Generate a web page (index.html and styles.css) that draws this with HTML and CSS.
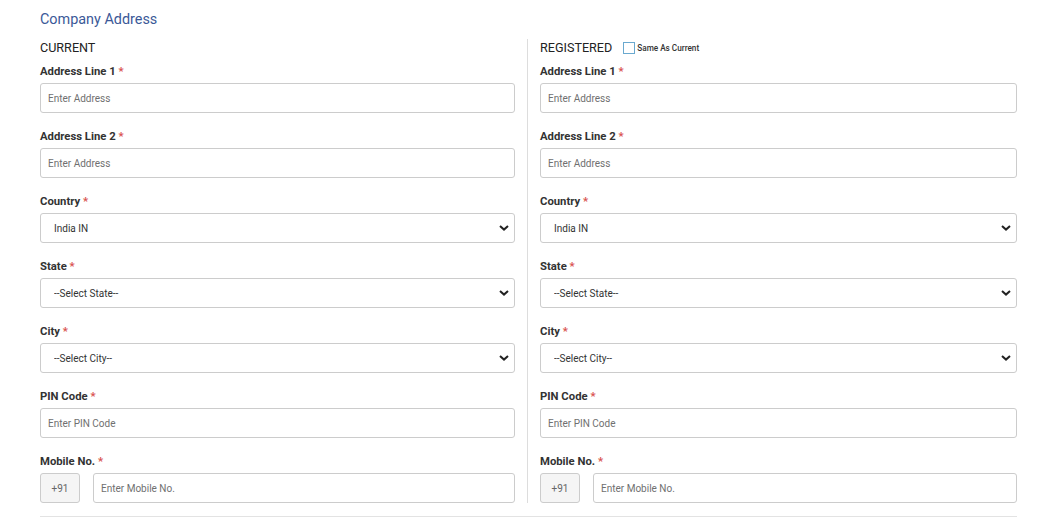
FILE: index.html
```html
<!DOCTYPE html>
<html>
<head>
<meta charset="utf-8">
<link rel="stylesheet" href="styles.css">
</head>
<body>
<div class="page">
  <h2 class="title">Company Address</h2>
  <div class="cols">
    <div class="col col-left">
      <div class="col-head"><span class="col-title">CURRENT</span></div>
      <div class="field"><label class="lbl">Address Line 1 <span class="req">*</span></label><input class="ctl" placeholder="Enter Address"></div>
      <div class="field"><label class="lbl">Address Line 2 <span class="req">*</span></label><input class="ctl" placeholder="Enter Address"></div>
      <div class="field"><label class="lbl">Country <span class="req">*</span></label><div class="sel-wrap"><select class="ctl sel"><option>India IN</option></select><svg class="chev" viewBox="0 0 10 6" width="10" height="6"><path d="M1 1 L5 4.6 L9 1" fill="none" stroke="#222" stroke-width="2"/></svg></div></div>
      <div class="field"><label class="lbl">State <span class="req">*</span></label><div class="sel-wrap"><select class="ctl sel"><option>--Select State--</option></select><svg class="chev" viewBox="0 0 10 6" width="10" height="6"><path d="M1 1 L5 4.6 L9 1" fill="none" stroke="#222" stroke-width="2"/></svg></div></div>
      <div class="field"><label class="lbl">City <span class="req">*</span></label><div class="sel-wrap"><select class="ctl sel"><option>--Select City--</option></select><svg class="chev" viewBox="0 0 10 6" width="10" height="6"><path d="M1 1 L5 4.6 L9 1" fill="none" stroke="#222" stroke-width="2"/></svg></div></div>
      <div class="field"><label class="lbl">PIN Code <span class="req">*</span></label><input class="ctl" placeholder="Enter PIN Code"></div>
      <div class="field last"><label class="lbl">Mobile No. <span class="req">*</span></label><div class="mob"><span class="code">+91</span><input class="ctl" placeholder="Enter Mobile No."></div></div>
    </div>
    <div class="col col-right">
      <div class="col-head"><span class="col-title">REGISTERED</span><label class="same"><span class="box"></span>Same As Current</label></div>
      <div class="field"><label class="lbl">Address Line 1 <span class="req">*</span></label><input class="ctl" placeholder="Enter Address"></div>
      <div class="field"><label class="lbl">Address Line 2 <span class="req">*</span></label><input class="ctl" placeholder="Enter Address"></div>
      <div class="field"><label class="lbl">Country <span class="req">*</span></label><div class="sel-wrap"><select class="ctl sel"><option>India IN</option></select><svg class="chev" viewBox="0 0 10 6" width="10" height="6"><path d="M1 1 L5 4.6 L9 1" fill="none" stroke="#222" stroke-width="2"/></svg></div></div>
      <div class="field"><label class="lbl">State <span class="req">*</span></label><div class="sel-wrap"><select class="ctl sel"><option>--Select State--</option></select><svg class="chev" viewBox="0 0 10 6" width="10" height="6"><path d="M1 1 L5 4.6 L9 1" fill="none" stroke="#222" stroke-width="2"/></svg></div></div>
      <div class="field"><label class="lbl">City <span class="req">*</span></label><div class="sel-wrap"><select class="ctl sel"><option>--Select City--</option></select><svg class="chev" viewBox="0 0 10 6" width="10" height="6"><path d="M1 1 L5 4.6 L9 1" fill="none" stroke="#222" stroke-width="2"/></svg></div></div>
      <div class="field"><label class="lbl">PIN Code <span class="req">*</span></label><input class="ctl" placeholder="Enter PIN Code"></div>
      <div class="field last"><label class="lbl">Mobile No. <span class="req">*</span></label><div class="mob"><span class="code">+91</span><input class="ctl" placeholder="Enter Mobile No."></div></div>
    </div>
  </div>
  <div class="rule"></div>
</div>
</body>
</html>
```

FILE: styles.css
```css
html, body { margin: 0; padding: 0; background: #fff; }
body { font-family: Roboto, "Liberation Sans", Arial, sans-serif; color: #333; }
.page { width: 977px; padding: 10px 0 0 40px; }
.title { margin: 0; font-size: 14.4px; font-weight: 400; line-height: 20px; color: #3b5998; }
.cols { display: grid; grid-template-columns: 487px 490px; margin-top: 9px; }
.col-left { padding-right: 12px; }
.col-right { border-left: 1px solid #ddd; padding-left: 12px; }
.col-head { display: flex; align-items: center; height: 17px; margin-bottom: 7px; }
.col-title { font-size: 12.6px; line-height: 17px; color: #222; }
.same { display: flex; align-items: center; margin-left: 11px; font-size: 8.2px; font-weight: 500; color: #333; }
.box { width: 10px; height: 10px; border: 1px solid #6aa9cf; margin-right: 2px; background: #fff; }
.field { display: flex; flex-direction: column; margin-bottom: 15px; }
.field.last { margin-bottom: 0; }
.lbl { font-size: 11.3px; font-weight: 700; line-height: 16px; color: #333; padding-top: 1px; margin-bottom: 3px; }
.req { color: #d9534f; font-weight: 700; }
.ctl { box-sizing: border-box; height: 30px; width: 100%; border: 1px solid #ccc; border-radius: 3px; padding: 0 7px; font-family: Roboto, "Liberation Sans", Arial, sans-serif; font-size: 10px; color: #333; background: #fff; outline: none; margin: 0; }
.ctl::placeholder { color: #707070; }
.sel-wrap { position: relative; }
.sel { appearance: none; -webkit-appearance: none; padding-left: 13px; color: #333; }
.chev { position: absolute; right: 6px; top: 12px; pointer-events: none; }
.mob { display: flex; gap: 13px; }
.code { box-sizing: border-box; flex: 0 0 40px; height: 30px; border: 1px solid #ccc; border-radius: 3px; background: #f5f5f5; display: flex; align-items: center; justify-content: center; font-size: 10px; color: #666; }
.mob .ctl { flex: 1; }
.rule { height: 1px; background: #e3e3e3; margin-top: 13px; }
```
